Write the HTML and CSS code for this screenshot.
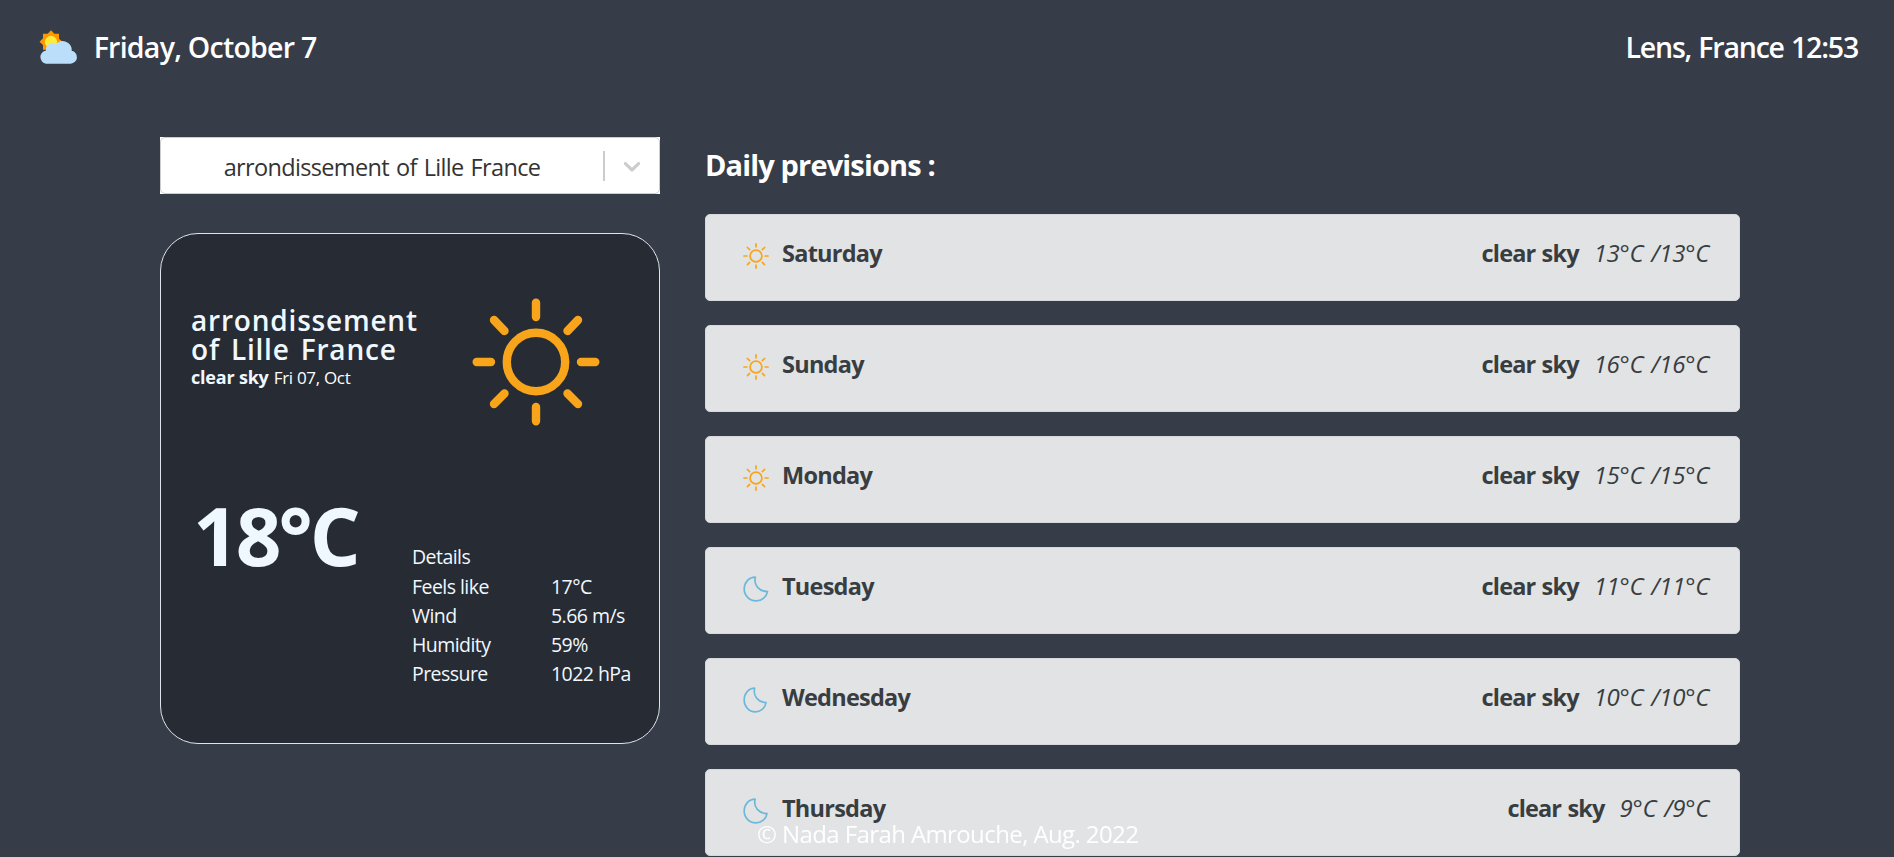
FILE: index.html
```html
<!DOCTYPE html>
<html lang="en">
<head>
<meta charset="utf-8">
<title>Weather</title>
<link rel="stylesheet" href="styles.css">
</head>
<body>
<svg class="defs" width="0" height="0">
  <symbol id="sun" viewBox="-64 -64 128 128">
    <g fill="none" stroke="#f8a51b" stroke-width="8.4" stroke-linecap="round">
      <circle r="29.2"/>
      <path d="M0-59.3V-45M0 59.3V45M-59.3 0H-45M59.3 0H45M-42-42L-31.5-31M42-42L31.5-31M-42 42L-31.5 31.5M42 42L31.5 31.5"/>
    </g>
  </symbol>
  <symbol id="moon" viewBox="0 0 26 26" preserveAspectRatio="none">
    <path fill="none" stroke="#6db8d8" stroke-width="1.7" stroke-linejoin="round" d="M12.4 1.2C6 1.2 1.2 6.6 1.2 13A11.9 11.9 0 0 0 13 24.9C19 24.9 23.6 20.5 24.5 15.6C16.5 15.4 10.2 9.2 12.4 1.2Z"/>
  </symbol>
</svg>

<header class="topbar">
  <div class="brand">
    <svg class="logo" viewBox="58 60 116 104">
      <path fill="#ff9800" d="M94 61L104 71H118V86L129 95L118 106V119H104L94 129L84 119H70V105L59.5 95L70 85V71H84Z"/>
      <circle cx="94" cy="96" r="18.5" fill="#ffeb3b"/>
      <path fill="#bbdefb" d="M79 161A20 20 0 0 1 79 121.5A18.500 18.500 0 0 1 108 103.500A27 27 0 0 1 156 122A19.7 19.7 0 0 1 153 161Z"/>
    </svg>
    <span class="today">Friday, October 7</span>
  </div>
  <span class="place">Lens, France 12:53</span>
</header>

<main class="content">
  <section class="current">
    <div class="select-wrap">
      <div class="select">
        <span class="select-value">arrondissement of Lille France</span>
        <span class="select-divider"></span>
        <svg class="chevron" viewBox="0 0 20 20"><path fill="#ccc" d="M4.516 7.548c0.436-0.446 1.043-0.481 1.576 0l3.908 3.747 3.908-3.747c0.533-0.481 1.141-0.446 1.574 0 0.436 0.445 0.408 1.197 0 1.615-0.406 0.418-4.695 4.502-4.695 4.502-0.217 0.223-0.502 0.335-0.787 0.335s-0.570-0.112-0.789-0.335c0 0-4.287-4.084-4.695-4.502s-0.436-1.170 0-1.615z"/></svg>
      </div>
    </div>
    <article class="card">
      <div class="card-top">
        <div class="where">
          <h2 class="city">arrondissement<br>of Lille France</h2>
          <p class="summary"><b class="sky">clear sky</b><span class="date">Fri 07, Oct</span></p>
        </div>
        <svg class="big-sun"><use href="#sun"/></svg>
      </div>
      <div class="card-bottom">
        <span class="temp">18°C</span>
        <dl class="details">
          <dt class="wide">Details</dt>
          <dt>Feels like</dt><dd>17°C</dd>
          <dt>Wind</dt><dd>5.66 m/s</dd>
          <dt>Humidity</dt><dd>59%</dd>
          <dt>Pressure</dt><dd>1022 hPa</dd>
        </dl>
      </div>
    </article>
  </section>

  <section class="daily">
    <h3 class="daily-title">Daily previsions :</h3>
    <div class="days">
      <div class="day"><svg class="icon"><use href="#sun"/></svg><span class="name">Saturday</span><b class="state">clear sky</b><i class="range">13°C /13°C</i></div>
      <div class="day"><svg class="icon"><use href="#sun"/></svg><span class="name">Sunday</span><b class="state">clear sky</b><i class="range">16°C /16°C</i></div>
      <div class="day"><svg class="icon"><use href="#sun"/></svg><span class="name">Monday</span><b class="state">clear sky</b><i class="range">15°C /15°C</i></div>
      <div class="day"><svg class="icon"><use href="#moon"/></svg><span class="name">Tuesday</span><b class="state">clear sky</b><i class="range">11°C /11°C</i></div>
      <div class="day"><svg class="icon narrow"><use href="#moon"/></svg><span class="name">Wednesday</span><b class="state">clear sky</b><i class="range">10°C /10°C</i></div>
      <div class="day"><svg class="icon medium"><use href="#moon"/></svg><span class="name">Thursday</span><b class="state">clear sky</b><i class="range">9°C /9°C</i></div>
    </div>
  </section>
</main>
<footer class="credit">© Nada Farah Amrouche, Aug. 2022</footer>
</body>
</html>
```
FILE: styles.css
```css
* { box-sizing: border-box; }

body {
  margin: 0;
  height: 857px;
  overflow: hidden;
  background: #363c48;
  color: #fff;
  font-family: "Open Sans", "Noto Sans", sans-serif;
}

h2, h3, p, dl, dt, dd { margin: 0; }
.defs { display: block; }
svg { flex: none; }

.topbar {
  display: flex;
  justify-content: space-between;
  align-items: flex-start;
  height: 137px;
  padding: 27px 36px 0 39px;
  font-size: 28.5px;
  font-weight: 600;
  line-height: 40px;
  white-space: nowrap;
}
.brand { display: flex; }
.logo { width: 38.7px; height: 34.7px; margin: 3px 16px 0 0; }
.today { letter-spacing: -0.75px; }
.place { letter-spacing: -1.2px; word-spacing: 1px; }

.content {
  display: flex;
  gap: 45px;
  padding-left: 160px;
}

.current { width: 500px; }
.select-wrap { background: #fff; }
.select {
  display: flex;
  align-items: center;
  height: 57px;
  border: 1px solid #ccc;
  border-radius: 5px;
  color: #333;
}
.select-value {
  width: 442px;
  padding-top: 3px;
  text-align: center;
  font-size: 23.5px;
  line-height: 32px;
  letter-spacing: -0.65px;
  word-spacing: 1.5px;
}
.select-divider { width: 2px; height: 30px; background: #ccc; }
.chevron { width: 28px; height: 28px; margin-left: 13px; }

.card {
  height: 511px;
  margin-top: 39px;
  border: 1px solid #dfe4ea;
  border-radius: 38px;
  background: #272b33;
  color: aliceblue;
}
.card-top {
  display: flex;
  height: 249px;
  padding: 64px 0 0 30px;
}
.where { width: 281px; padding-top: 8px; white-space: nowrap; }
.city {
  font-size: 28px;
  font-weight: 600;
  line-height: 29px;
  letter-spacing: 0.8px;
  word-spacing: 3px;
}
.summary { line-height: 26px; }
.sky { font-size: 18px; letter-spacing: -0.2px; }
.date { margin-left: 5px; font-size: 17px; letter-spacing: -0.3px; color: #fff; }
.big-sun { width: 128px; height: 128px; }

.card-bottom { display: flex; padding-left: 32px; }
.temp {
  width: 219px;
  padding-top: 12px;
  font-size: 80px;
  font-weight: 700;
  line-height: 80px;
  letter-spacing: -3px;
}
.details {
  display: grid;
  grid-template-columns: 139px 1fr;
  grid-template-rows: 30px;
  grid-auto-rows: 29px;
  padding-top: 59px;
  font-size: 19.5px;
  line-height: 29px;
  letter-spacing: -0.55px;
  white-space: nowrap;
}
.wide { grid-column: 1 / -1; }

.daily { width: 1035px; }
.daily-title {
  height: 77px;
  padding-top: 8px;
  font-size: 29px;
  font-weight: 700;
  line-height: 40px;
  letter-spacing: -0.85px;
}
.days { display: flex; flex-direction: column; gap: 24px; }
.day {
  display: flex;
  align-items: flex-start;
  height: 87px;
  padding: 20px 30px 0 37px;
  border: 1px solid #d6d8db;
  border-radius: 5px;
  background: #e2e3e5;
  color: #383d41;
  font-size: 24px;
  line-height: 36px;
  white-space: nowrap;
}
.icon { width: 26px; height: 26px; margin-top: 8px; }
.narrow { width: 24.5px; }
.medium { width: 25.5px; }
.name { margin-left: 13px; font-size: 23.5px; font-weight: 700; letter-spacing: -0.75px; }
.narrow + .name { margin-left: 14.5px; }
.medium + .name { margin-left: 13.5px; }
.state { margin-left: auto; font-size: 23.5px; letter-spacing: -0.85px; word-spacing: 1px; }
.range { margin-left: 15px; letter-spacing: -0.3px; word-spacing: 2px; }

.credit {
  position: fixed;
  left: 757px;
  top: 816px;
  font-size: 24px;
  line-height: 36px;
  letter-spacing: -0.6px;
  color: #fff;
}
```
